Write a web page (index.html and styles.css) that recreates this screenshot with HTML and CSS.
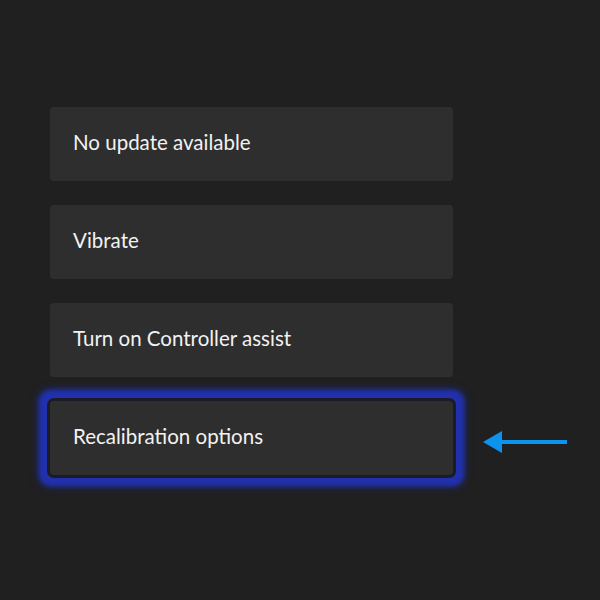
FILE: index.html
```html
<!DOCTYPE html>
<html lang="en">
<head>
  <meta charset="UTF-8">
  <title>Controller settings</title>
  <link rel="stylesheet" href="styles.css">
</head>
<body>
<div class="menu">
  <div class="item">No update available</div>
  <div class="item">Vibrate</div>
  <div class="item">Turn on Controller assist</div>
  <div class="row">
    <div class="item focused">Recalibration options</div>
    <svg class="arrow" width="84" height="26" viewBox="0 0 84 26">
      <path d="M0 13 L19 2 L19 24 Z" fill="#0b93ee"/>
      <rect x="16" y="11" width="68" height="4" fill="#0b93ee"/>
    </svg>
  </div>
</div>
</body>
</html>
```

FILE: styles.css
```css
body {
  margin: 0;
  min-height: 100vh;
  background-color: #202020;
  font-family: Lato, 'Open Sans', sans-serif;
}
.menu {
  display: flex;
  flex-direction: column;
  gap: 24px;
  padding: 107px 0 100px 50px;
}
.item {
  width: 403px;
  height: 74px;
  box-sizing: border-box;
  padding: 0 0 4px 23px;
  display: flex;
  align-items: center;
  background-color: #2e2e2e;
  border-radius: 4px;
  color: #f2f2f2;
  font-size: 20.5px;
}
.row {
  display: flex;
  align-items: center;
  gap: 30px;
}
/* focus ring: dark gap + blurred blue glow */
.focused {
  box-shadow: 0 0 0 3px #1b1b26, 0 0 4px 11px #2131ae, 0 0 8px 12px rgba(33, 49, 174, 0.5);
}
.arrow {
  display: block;
  margin-top: 8px;
}
```
